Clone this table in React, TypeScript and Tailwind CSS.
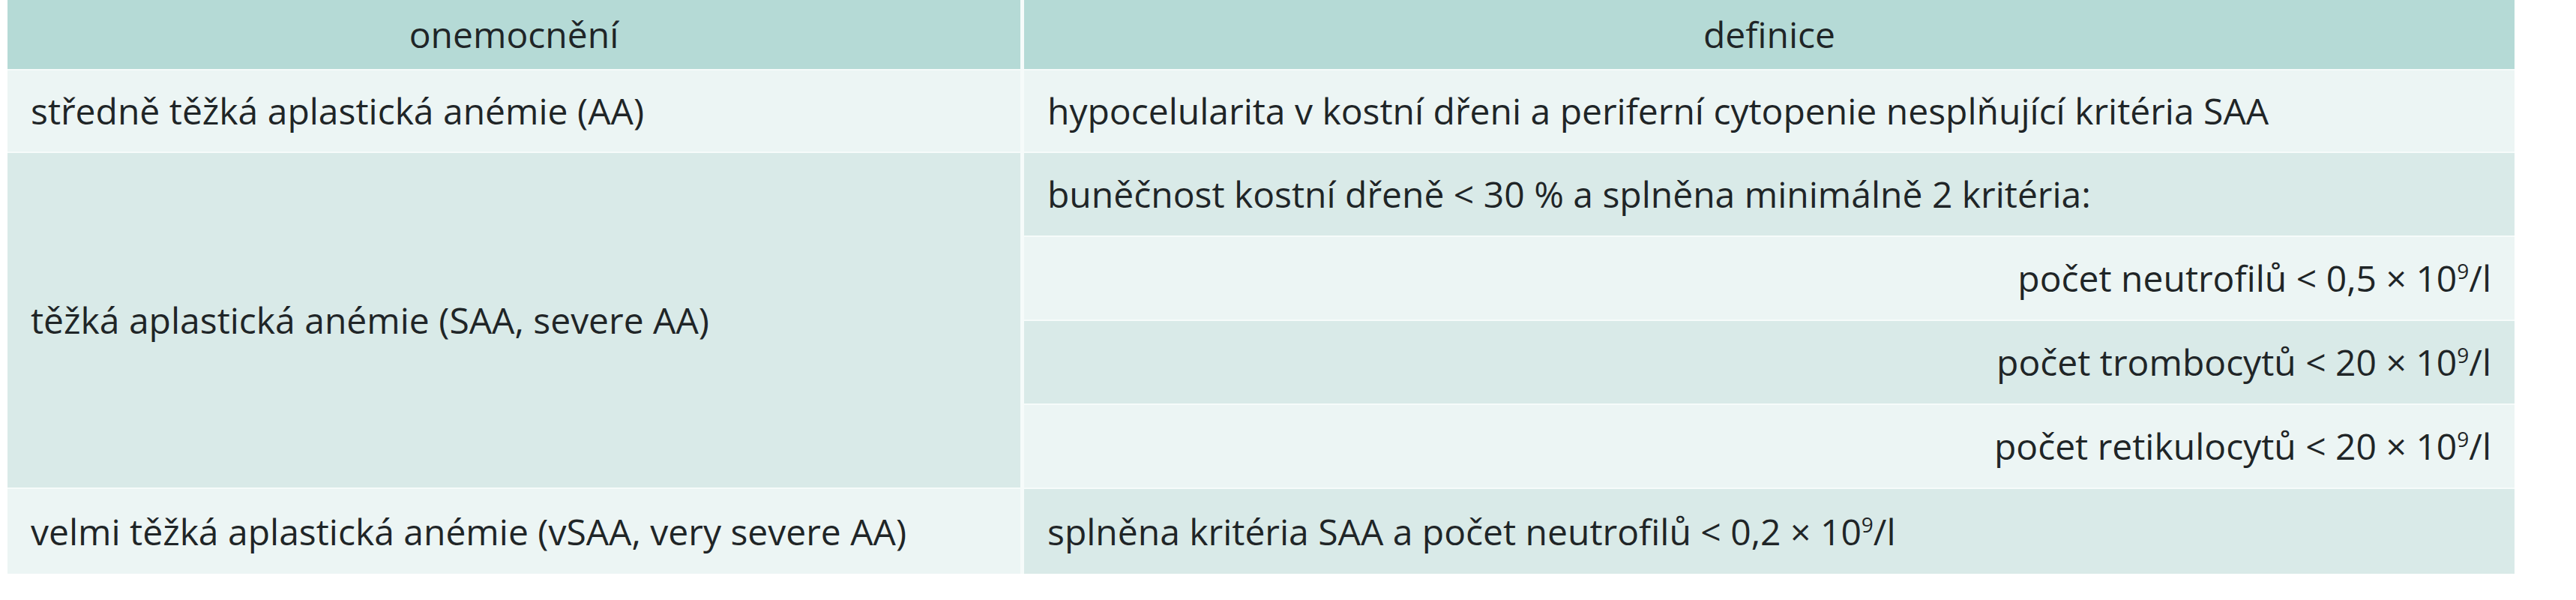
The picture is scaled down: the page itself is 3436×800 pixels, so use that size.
const font = { fontFamily: '"Open Sans", "Liberation Sans", sans-serif' };

function Sup9() {
  return <span className="text-[28px] relative -top-[17px]">9</span>;
}

export default function App() {
  const cell = "flex items-center px-[31px] text-[48px] text-[#1f2527] leading-none";
  const light = "bg-[#ecf5f4]";
  const dark = "bg-[#d9eae8]";

  return (
    <div className="w-[3436px] h-[800px] bg-white" style={font}>
      <div className="ml-[10px] w-[3344px] grid grid-cols-[1351px_1988px] grid-rows-[92px_108px_110px_110px_110px_110px_113px] gap-x-[5px] gap-y-[2px] bg-[#f6fbfa]">
        {/* header */}
        <div className={`${cell} justify-center bg-[#b5dad6] text-[#1a1f20]`}>onemocnění</div>
        <div className={`${cell} justify-center bg-[#b5dad6] text-[#1a1f20]`}>definice</div>

        {/* AA */}
        <div className={`${cell} ${light}`}>středně těžká aplastická anémie (AA)</div>
        <div className={`${cell} ${light}`}>
          hypocelularita v kostní dřeni a periferní cytopenie nesplňující kritéria SAA
        </div>

        {/* SAA */}
        <div className={`${cell} ${dark} row-span-4`}>těžká aplastická anémie (SAA, severe AA)</div>
        <div className={`${cell} ${dark}`}>
          buněčnost kostní dřeně &lt; 30 % a splněna minimálně 2 kritéria:
        </div>
        <div className={`${cell} ${light} justify-end`}>
          <span>
            počet neutrofilů &lt; 0,5 × 10<Sup9 />/l
          </span>
        </div>
        <div className={`${cell} ${dark} justify-end`}>
          <span>
            počet trombocytů &lt; 20 × 10<Sup9 />/l
          </span>
        </div>
        <div className={`${cell} ${light} justify-end`}>
          <span>
            počet retikulocytů &lt; 20 × 10<Sup9 />/l
          </span>
        </div>

        {/* vSAA */}
        <div className={`${cell} ${light}`}>velmi těžká aplastická anémie (vSAA, very severe AA)</div>
        <div className={`${cell} ${dark}`}>
          <span>
            splněna kritéria SAA a počet neutrofilů &lt; 0,2 × 10<Sup9 />/l
          </span>
        </div>
      </div>
    </div>
  );
}
